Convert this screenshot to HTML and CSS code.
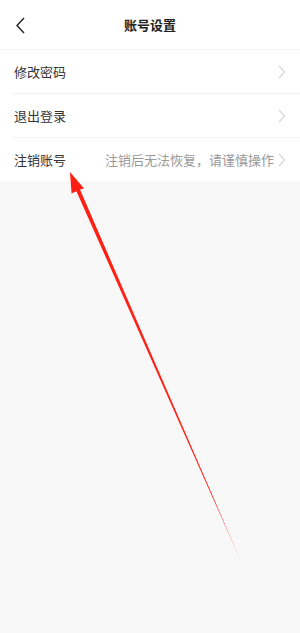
FILE: index.html
```html
<!DOCTYPE html>
<html>

<head>
    <meta charset="utf-8" />
    <title>账号设置</title>
    <link rel="stylesheet" href="styles.css">
</head>

<body>
    <div class="header">
        <svg class="back" width="12" height="18" viewBox="0 0 12 18">
            <path d="M9 2 L2 9.5 L9 17" fill="none" stroke="#222" stroke-width="1.4" />
        </svg>
        <h1>账号设置</h1>
    </div>
    <ul class="list">
        <li class="row">
            <span class="label">修改密码</span>
            <svg class="arrow" width="8" height="14" viewBox="0 0 8 14"><path d="M1 1 L6.5 7 L1 13" fill="none" stroke="#ccc" stroke-width="1.1" /></svg>
        </li>
        <li class="row">
            <span class="label">退出登录</span>
            <svg class="arrow" width="8" height="14" viewBox="0 0 8 14"><path d="M1 1 L6.5 7 L1 13" fill="none" stroke="#ccc" stroke-width="1.1" /></svg>
        </li>
        <li class="row">
            <span class="label">注销账号</span>
            <span class="hint">注销后无法恢复，请谨慎操作</span>
            <svg class="arrow" width="8" height="14" viewBox="0 0 8 14"><path d="M1 1 L6.5 7 L1 13" fill="none" stroke="#ccc" stroke-width="1.1" /></svg>
        </li>
    </ul>

    <!-- annotation arrow drawn over the page -->
    <svg class="mark" width="300" height="633" viewBox="0 0 300 633">
        <defs>
            <linearGradient id="fade" gradientUnits="userSpaceOnUse" x1="70" y1="172" x2="247" y2="575">
                <stop offset="0" stop-color="#ff1f12" />
                <stop offset="0.8" stop-color="#ff2418" />
                <stop offset="1" stop-color="#ff2418" stop-opacity="0.1" />
            </linearGradient>
        </defs>
        <polygon points="70,172 84,188.5 80,189.6 247,575 76.4,191.2 71.5,193.5" fill="url(#fade)" />
    </svg>
</body>

</html>
```

FILE: styles.css
```css
* {
    margin: 0;
    padding: 0;
    box-sizing: border-box;
}

html,
body {
    height: 100%;
}

body {
    background: #f8f8f8;
    color: #333;
    font-family: "Noto Sans CJK SC", "Noto Sans", sans-serif;
    font-size: 13px;
    position: relative;
}

ul {
    list-style: none;
}

/* header */

.header {
    height: 50px;
    background: #fff;
    border-bottom: 1px solid #f3f3f3;
    display: flex;
    align-items: center;
    justify-content: center;
    position: relative;
}

.header h1 {
    font-size: 13px;
    font-weight: bold;
    color: #222;
}

.back {
    position: absolute;
    left: 15px;
    top: 16px;
}

/* list */

.list {
    background: #fff;
    padding-left: 12px;
}

.row {
    height: 44px;
    display: flex;
    align-items: center;
    padding: 0 14px 0 2px;
    border-bottom: 1px solid #f3f3f3;
}

.row:last-child {
    border-bottom: none;
    height: 43px;
}

.label {
    flex: 1;
    color: #333;
}

.hint {
    color: #999;
    margin-right: 4px;
}

.arrow {
    flex: none;
}

.mark {
    position: absolute;
    top: 0;
    left: 0;
    pointer-events: none;
}
```
